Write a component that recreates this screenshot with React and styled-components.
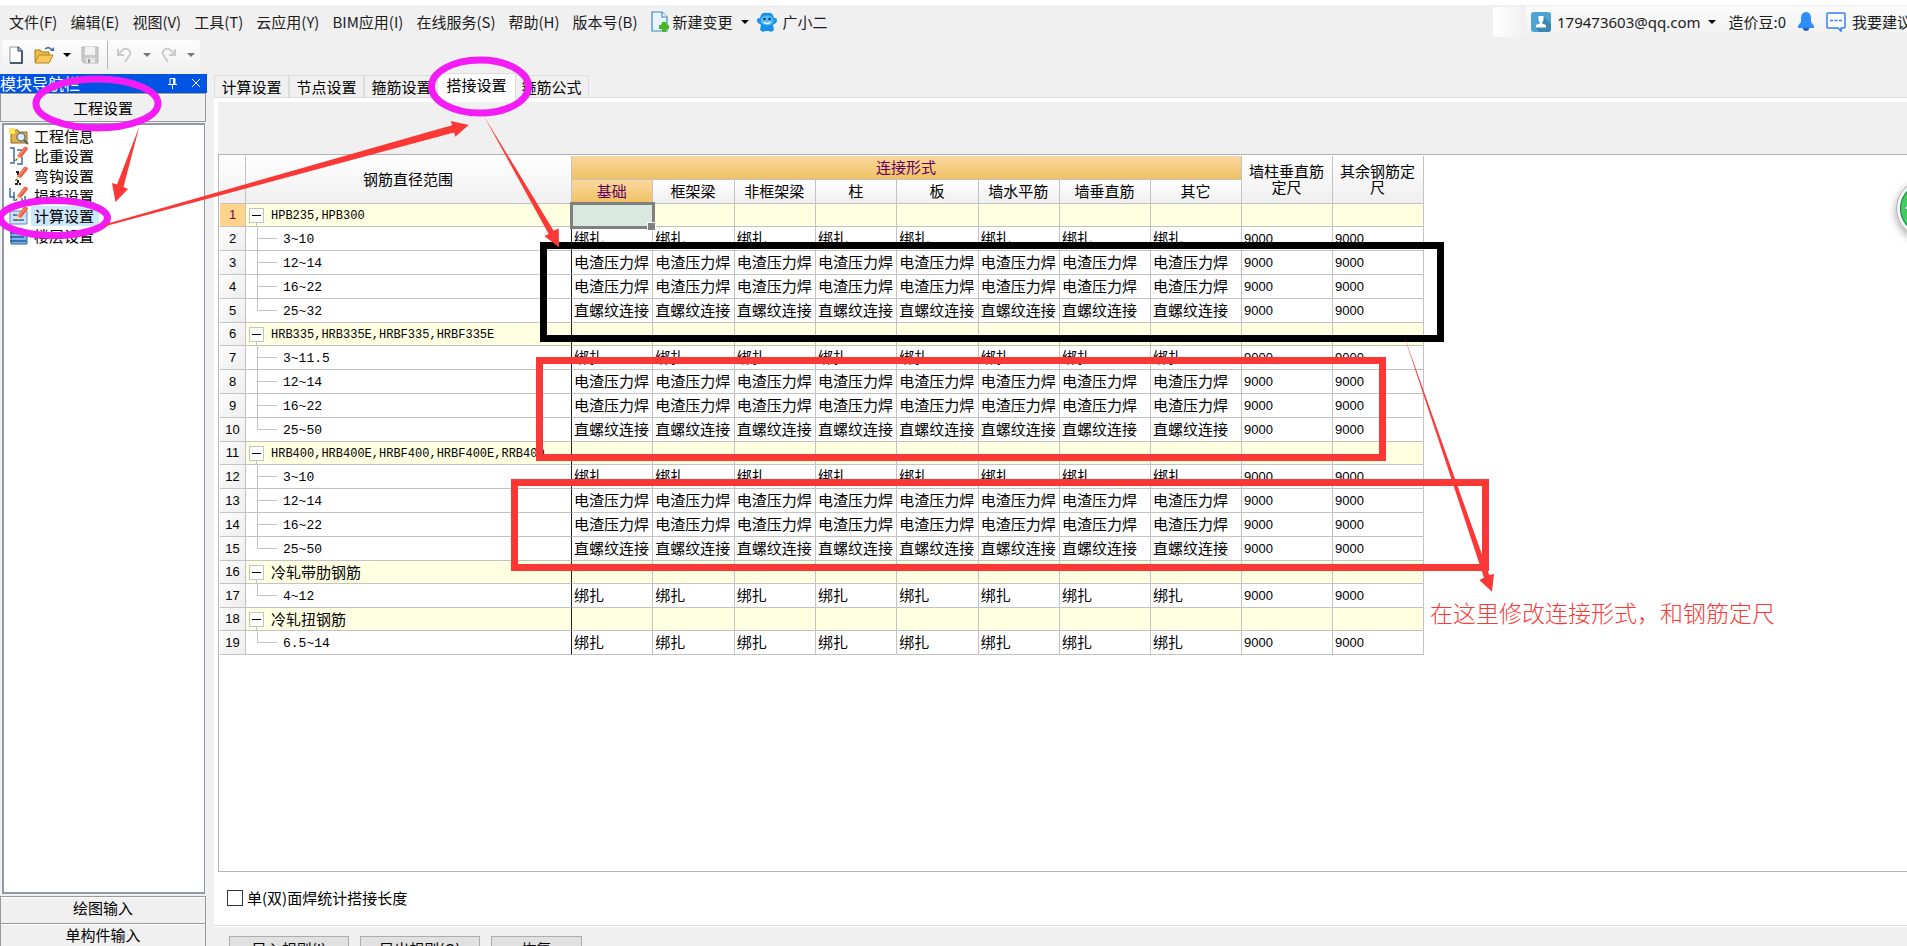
import React from "react";
import styled, { createGlobalStyle, css } from "styled-components";

const GlobalStyle = createGlobalStyle`
  * { box-sizing: border-box; }
  html, body { margin: 0; overflow: hidden; }
  body {
    background: #f0f0f0;
    color: #000;
    font-family: "Noto Sans CJK SC", sans-serif;
    font-size: 15px;
    line-height: 20px;
  }
  button, input { font: inherit; color: inherit; margin: 0; }
  ul { list-style: none; margin: 0; padding: 0; }
`;

const Window = styled.div`
  position: relative;
  display: flex;
  flex-direction: column;
  height: 100vh;
  overflow: hidden;
  border-top: 5px solid #fff;
`;

const MenuBar = styled.header`
  display: flex;
  flex: none;
  align-items: center;
  height: 33px;
  padding-left: 9px;
  white-space: nowrap;
  color: #1c1c1c;
`;

const Menus = styled.nav`
  display: flex;
  align-items: center;
  gap: ${(p) => p.$gap}px;
`;

const PlainButton = styled.button`
  display: flex;
  align-items: center;
  gap: ${(p) => p.$gap || 0}px;
  padding: 0;
  border: 0;
  background: none;
  white-space: nowrap;
`;

const Caret = styled.span`
  border: 4px solid transparent;
  border-top-color: ${(p) => (p.$dim ? "#777" : "#000")};
  border-bottom-width: 0;
  margin-left: ${(p) => p.$space || 0}px;
`;

const Account = styled.div`
  display: flex;
  align-items: center;
  height: 32px;
  margin-left: auto;
  margin-right: -5px;
`;

const AccountGrip = styled.div`
  width: 31px;
  height: 30px;
  margin-right: 2px;
  border-radius: 3px;
  background: linear-gradient(90deg, #fff, #f0f0f0);
`;

const AccountTools = styled.div`
  display: flex;
  align-items: center;
  gap: 12px;
  height: 32px;
  padding-left: 5px;
  background: linear-gradient(#fbfbfb, #f0f0f0);
`;

const Email = styled.span`
  font-family: "Noto Sans", sans-serif;
`;

const ToolBar = styled.div`
  display: flex;
  flex: none;
  align-items: center;
  width: 198px;
  height: 30px;
  margin: 2px 0 4px 2px;
  padding-left: 6px;
  border-radius: 3px;
  background: linear-gradient(#fdfdfd, #f1f1f1);
`;

const ToolGroup = styled.div`
  display: flex;
  align-items: center;
  gap: ${(p) => p.$gap}px;
  height: 28px;
  ${(p) => p.$divided && css`
    padding-left: 9px;
    margin-left: 8px;
    border-left: 1px solid #b4b4b4;
  `}
`;

const Workspace = styled.div`
  display: flex;
  flex: 1;
  min-height: 0;
`;

const NavPanel = styled.aside`
  display: flex;
  flex: none;
  flex-direction: column;
  width: 207px;
  margin-bottom: -4px;
`;

const NavTitle = styled.div`
  display: flex;
  flex: none;
  align-items: center;
  gap: 14px;
  height: 19px;
  padding: 0 6px 1px 0;
  background: #0054e3;
  color: #fff;
  font-size: 16px;
  line-height: 18px;
`;

const NavTitleText = styled.span`
  flex: 1;
`;

const NavSection = styled.button`
  flex: none;
  height: ${(p) => (p.$head ? 29 : 27)}px;
  width: 206px;
  padding: 0 0 ${(p) => (p.$head ? 0 : 4)}px;
  border: 1px solid #9a9a9a;
  border-bottom-width: ${(p) => (p.$head ? 1 : 0)}px;
  background: #f0f0f0;
  box-shadow: inset 0 1px #fff;
  line-height: 20px;
`;

const NavList = styled.ul`
  flex: 1;
  margin: 1px 2px 2px 2px;
  width: 203px;
  padding-top: 1px;
  border: 2px solid #9298a5;
  border-right-width: 1px;
  background: #fff;
`;

const NavItem = styled.button`
  display: flex;
  align-items: center;
  gap: 2px;
  width: 100%;
  height: 20px;
  padding: 0 0 0 5px;
  border: 0;
  background: none;
  text-align: left;
`;

const NavLabel = styled.span`
  padding: 0 5px 0 3px;
  height: 20px;
  line-height: 20px;
  background: ${(p) => (p.$active ? "#cce8ff" : "transparent")};
`;

const Page = styled.main`
  display: flex;
  flex: 1;
  flex-direction: column;
  min-width: 0;
  margin-left: 7px;
`;

const TabStrip = styled.div`
  display: flex;
  flex: none;
  align-items: flex-end;
  height: 24px;
  border-bottom: 1px solid #dcdcdc;
`;

const Tab = styled.button`
  width: 75px;
  height: 22px;
  padding: 0;
  border: 1px solid #dcdcdc;
  border-bottom: 0;
  background: #f0f0f0;

  ${(p) => p.$active && css`
    z-index: 1;
    width: 79px;
    height: 26px;
    margin: 0 -2px -2px;
    padding-bottom: 4px;
    background: #fff;
  `}
`;

const PageBody = styled.section`
  display: flex;
  flex: 1;
  flex-direction: column;
  min-height: 0;
  border-left: 4px solid #fff;
  border-top: 4px solid #fff;
`;

const Banner = styled.div`
  flex: none;
  height: 52px;
`;

const GridFrame = styled.div`
  flex: 1;
  min-height: 0;
  padding: 1px 0 0 1px;
  border: 1px solid #b2b2b8;
  border-right: 0;
  background: #fff;
  overflow: hidden;
`;

const Grid = styled.table`
  width: 1204px;
  table-layout: fixed;
  border-collapse: separate;
  border-spacing: 0;
`;

const cellLines = css`
  border-right: 1px solid #c3c3c3;
  border-bottom: 1px solid #c3c3c3;
`;

const HeadCell = styled.th`
  ${cellLines}
  height: 24px;
  padding: 0 5px 2px 4px;
  font-weight: 400;
  line-height: 16px;
  color: ${(p) => (p.$hot ? "#600060" : "#000")};
  background: ${(p) =>
    p.$hot ? "linear-gradient(#fad8a0, #f0c062)" : "linear-gradient(#fff, #efefef)"};
`;

const RowNumber = styled.th`
  ${cellLines}
  padding: 0;
  font: 400 13px/20px "Liberation Sans", sans-serif;
  color: ${(p) => (p.$hot ? "#800040" : "#000")};
  background: ${(p) => (p.$hot ? "#ffd389" : "linear-gradient(135deg, #fdfdfd, #ededed)")};
`;

const Row = styled.tr`
  height: ${(p) => (p.$group ? 23 : 24)}px;
  background: ${(p) => (p.$group ? "#ffffe1" : "#fff")};
`;

const NameCell = styled.td`
  border-right: 1px solid #222;
  border-bottom: 1px solid #c3c3c3;
  padding: 0;
`;

const Cell = styled.td`
  ${cellLines}
  padding: 0 0 2px 2px;
  line-height: 20px;
  white-space: nowrap;
  overflow: hidden;
`;

const NumberCell = styled(Cell)`
  padding-bottom: 0;
  font: 13px/20px "Liberation Sans", sans-serif;
`;

const SelectedCell = styled(Cell)`
  position: relative;
  overflow: visible;
  background: #d8eae0;
  outline: 3px solid #808080;
  outline-offset: -1px;

  &::after {
    content: "";
    position: absolute;
    right: -4px;
    bottom: -5px;
    width: 7px;
    height: 7px;
    border: 1px solid #fff;
    background: #808080;
  }
`;

const TreeNode = styled.div`
  display: flex;
  align-items: center;
  height: ${(p) => (p.$group ? 22 : 23)}px;
  padding-left: ${(p) => (p.$group ? 3 : 11)}px;
  gap: ${(p) => (p.$group ? 7 : 6)}px;
  line-height: 20px;
  white-space: nowrap;
`;

const TreeText = styled.span`
  ${(p) => p.$latin && css`
    font: ${p.$group ? 12 : 13}px/20px "Liberation Mono", monospace;
    padding-top: 2px;
  `}
`;

const ExpandColumn = styled.div`
  display: flex;
  flex-direction: column;
  align-items: center;
  align-self: stretch;
  padding-top: 4px;

  &::after {
    content: "";
    flex: 1;
    width: 1px;
    background: #c3c3c3;
  }
`;

const Expander = styled.button`
  display: flex;
  align-items: center;
  justify-content: center;
  width: 15px;
  height: 15px;
  padding: 0;
  border: 1px solid #c3c3c3;
  background: #fff;

  &::before {
    content: "";
    width: 9px;
    height: 1px;
    background: #000;
  }
`;

const Branch = styled.div`
  display: flex;
  flex-direction: column;
  align-self: stretch;
  width: 20px;

  &::before, &::after {
    content: "";
    flex: 1;
    border-left: 1px solid #c3c3c3;
  }
  &::before { border-bottom: 1px solid #c3c3c3; }
  &::after { border-left-color: ${(p) => (p.$last ? "transparent" : "#c3c3c3")}; }
`;

const Options = styled.div`
  display: flex;
  flex: none;
  align-items: center;
  height: 54px;
  margin-left: -4px;
  padding: 0 0 2px 13px;
  border-bottom: 1px solid #dcdcdc;
  background: #fff;
`;

const CheckLabel = styled.label`
  display: flex;
  align-items: center;
  gap: 4px;
`;

const CheckBox = styled.input`
  appearance: none;
  width: 16px;
  height: 16px;
  border: 1px solid #333;
  background: #fff;
`;

const Footer = styled.div`
  display: flex;
  flex: none;
  align-items: flex-start;
  gap: 11px;
  height: 20px;
  margin-left: -4px;
  padding: 9px 0 0 15px;
  border-top: 1px solid #fff;
  background: #f0f0f0;
`;

const FooterButton = styled.button`
  flex: none;
  width: ${(p) => (p.$short ? 91 : 120)}px;
  height: 26px;
  padding: 0;
  border: 1px solid #adadad;
  background: #e1e1e1;
`;

const Markup = styled.svg`
  position: absolute;
  left: 0;
  top: -5px;
  width: 1907px;
  height: 946px;
  pointer-events: none;
  z-index: 2;
`;

const Callout = styled.p`
  position: absolute;
  left: 1430px;
  top: 591px;
  margin: 0;
  color: #fb3836;
  font-size: 23px;
  font-weight: 300;
  line-height: 32px;
  white-space: nowrap;
  z-index: 3;
`;

const FloatingBall = styled.button`
  position: absolute;
  right: -48px;
  top: 174px;
  display: flex;
  align-items: center;
  width: 59px;
  height: 59px;
  padding: 0 0 4px 7px;
  border: 1px solid #aaa;
  border-radius: 50%;
  background: radial-gradient(circle, #44cc5e 24px, #127a55 25px, #f4f4f4 26px);
  box-shadow: 0 3px 8px rgba(0, 0, 0, 0.35);
`;

/* ---------- icons ---------- */

const NewChangeIcon = () => (
  <svg width="18" height="21" viewBox="0 0 18 21">
    <path d="M1 1h10l5 5v14H1z" fill="#e9f4fc" stroke="#3d87bd" strokeWidth="1.2" />
    <path d="M11 1v5h5" fill="#fff" stroke="#3d87bd" strokeWidth="1.2" />
    <path d="M13 10.500l5 5-5 5-5-5z" fill="#4bb51d" />
    <path d="M11 11h4v3h3v4h-3v3h-4v-3H8v-4h3z" fill="#4bb51d" />
  </svg>
);

const RobotIcon = () => (
  <svg width="20" height="20" viewBox="0 0 20 20">
    <path d="M4 3Q6 0 10 1q4-1 6 2l1 3q3 0 3 2 0 3-3 4l-1 1 1 5-3 2-2-1H8l-2 1-3-2 1-5-1-1Q0 11 0 8q0-2 3-2z" fill="#1a8fe6" />
    <ellipse cx="10" cy="8.500" rx="6.500" ry="5" fill="#4fbcf8" />
    <circle cx="7.500" cy="7" r="1.200" fill="#0d2a55" />
    <circle cx="12.500" cy="7" r="1.200" fill="#0d2a55" />
    <path d="M6.500 10q3.500 3 7 0" fill="none" stroke="#fff" strokeWidth="1.300" />
  </svg>
);

const UserIcon = () => (
  <svg width="20" height="20" viewBox="0 0 20 20">
    <rect width="20" height="20" rx="3" fill="#4da3d4" />
    <path d="M13 5l7 7v5q0 3-3 3H8l-3-4z" fill="#3a86b4" />
    <path d="M7.500 4h5v3.500q0 1.500-1.200 2.500v1.500l3.700 1.500v2.500H5V13l3.700-1.500V10Q7.500 9 7.500 7.500z" fill="#fff" />
  </svg>
);

const BellIcon = () => (
  <svg width="16" height="20" viewBox="0 0 16 20">
    <path d="M5 1q3-2 6 0 2 1.500 2 5v4l3 4v2H0v-2l3-4V6q0-3.500 2-5z" fill="#2f8dfa" />
    <path d="M4.500 16h7q-1 3-3.500 3t-3.500-3z" fill="#1a5fb8" />
  </svg>
);

const ChatIcon = () => (
  <svg width="20" height="20" viewBox="0 0 20 20" fill="none" stroke="#2f80f5">
    <path d="M2 1h16q1 0 1 1v13q0 1-1 1h-3v3l-3-3H2q-1 0-1-1V2q0-1 1-1z" fill="#fff" strokeWidth="1.500" />
    <path d="M4 8.500h3M8.500 8.500h3M13 8.500h3" strokeWidth="1.500" />
  </svg>
);

const NewFileIcon = () => (
  <svg width="16" height="18" viewBox="0 0 16 18">
    <path d="M2 1h8l4 4v12H2z" fill="#fff" stroke="#8a9bad" />
    <path d="M10 1l4 4v12H2" fill="none" stroke="#1c3752" strokeWidth="1.500" />
    <path d="M10 1v4h4" fill="#cfdce8" stroke="#1c3752" />
  </svg>
);

const OpenIcon = () => (
  <svg width="21" height="18" viewBox="0 0 21 18">
    <path d="M1 16V4h5l2 2h7v4" fill="#f0bd4a" stroke="#a87718" />
    <path d="M1 17L5 9h14l-4 8z" fill="#fbc95a" stroke="#b78322" />
    <path d="M11 3q4-3 7 1" fill="none" stroke="#3f6f98" strokeWidth="1.500" />
    <path d="M16 5h4V1z" fill="#3f6f98" />
  </svg>
);

const SaveIcon = () => (
  <svg width="18" height="18" viewBox="0 0 18 18">
    <path d="M1 1h16v16H3l-2-2z" fill="#c9c9c9" stroke="#b5b5b5" />
    <path d="M4 1h10v8H4z" fill="#f2f2f2" />
    <path d="M5 12h9v5H5z" fill="#e6e6e6" />
    <path d="M7 13h2v4H7z" fill="#999" />
  </svg>
);

const UndoIcon = ({ flip }) => (
  <svg width="15" height="16" viewBox="0 0 15 16" fill="none" stroke="#cbcbcb" strokeWidth="2">
    {flip ? (
      <path d="M14 2v6H8M13 7Q8 0 4 2.500T3 9l4 6" />
    ) : (
      <path d="M1 2v6h6M2 7q5-7 9-4.500T12 9l-4 6" />
    )}
  </svg>
);

const PinIcon = () => (
  <svg width="9" height="12" viewBox="0 0 9 12" fill="none" stroke="#fff">
    <path d="M2 7V1.500h5V7M0 7.500h9M4.500 8v4" />
    <path d="M6 1v6" strokeWidth="2" />
  </svg>
);

const CloseIcon = () => (
  <svg width="10" height="10" viewBox="0 0 10 10" stroke="#fff">
    <path d="M1 1l8 8M9 1L1 9" />
  </svg>
);

const Pencil = () => (
  <g>
    <path d="M8 9L15 0q3-1 4 2l-7 9z" fill="#ee5f42" />
    <path d="M8 9l-2 5 6-3z" fill="#f6d9a8" />
    <path d="M7 12l-1 2 2.500-1z" fill="#2b1a10" />
    <path d="M9.500 9L16 1.500" stroke="#f9b09a" />
  </g>
);

const navDrawings = {
  info: (
    <g>
      <path d="M2 3h7l1 2h8v11H2z" fill="#e3b04b" stroke="#8f6a1c" />
      <path d="M0 1h6v6H0z" fill="#ffe45c" />
      <circle cx="12" cy="10" r="4" fill="#dceefb" stroke="#6b7686" strokeWidth="1.500" />
      <path d="M15 13l4 4" stroke="#59616e" strokeWidth="2" />
    </g>
  ),
  weight: (
    <g>
      <path d="M1 1h4v15H1M8 3h5M13 10v7H8" fill="none" stroke="#3a6ea8" strokeWidth="1.500" />
      <Pencil />
    </g>
  ),
  hook: (
    <g>
      <path d="M7 5h4M9 5v12M6 17h6" fill="none" stroke="#222" strokeWidth="2" strokeDasharray="3 1" />
      <Pencil />
    </g>
  ),
  loss: (
    <g>
      <path d="M1 1v9h5M5 5v9M9 16h4v-5M16 9v7" fill="none" stroke="#3a6ea8" strokeWidth="1.500" />
      <Pencil />
    </g>
  ),
  calc: (
    <g>
      <path d="M1 4h17v13H1z" fill="#cfe3f8" stroke="#5d87bd" />
      <path d="M4 8h4M4 13h11" stroke="#33639c" strokeWidth="1.500" />
      <Pencil />
    </g>
  ),
  floor: (
    <g>
      <path d="M2 2h12l4 3v12H2z" fill="#7db3e8" stroke="#28649f" />
      <path d="M1 6h14M1 10h14M1 14h16" stroke="#1f5c99" strokeWidth="1.500" />
    </g>
  ),
};

const NavIcon = ({ kind }) => (
  <svg width="20" height="18" viewBox="0 0 20 18">{navDrawings[kind]}</svg>
);

/* ---------- data ---------- */

const menus = ["文件(F)", "编辑(E)", "视图(V)", "工具(T)", "云应用(Y)", "BIM应用(I)", "在线服务(S)", "帮助(H)", "版本号(B)"];

const navItems = [
  ["info", "工程信息"],
  ["weight", "比重设置"],
  ["hook", "弯钩设置"],
  ["loss", "损耗设置"],
  ["calc", "计算设置"],
  ["floor", "楼层设置"],
];

const tabs = ["计算设置", "节点设置", "箍筋设置", "搭接设置", "箍筋公式"];

const columns = ["基础", "框架梁", "非框架梁", "柱", "板", "墙水平筋", "墙垂直筋", "其它"];

const TIE = "绑扎";
const WELD = "电渣压力焊";
const THREAD = "直螺纹连接";

const groups = [
  { name: "HPB235,HPB300", rows: [["3~10", TIE], ["12~14", WELD], ["16~22", WELD], ["25~32", THREAD]] },
  { name: "HRB335,HRB335E,HRBF335,HRBF335E", rows: [["3~11.5", TIE], ["12~14", WELD], ["16~22", WELD], ["25~50", THREAD]] },
  { name: "HRB400,HRB400E,HRBF400,HRBF400E,RRB400,", rows: [["3~10", TIE], ["12~14", WELD], ["16~22", WELD], ["25~50", THREAD]] },
  { name: "冷轧带肋钢筋", cjk: true, rows: [["4~12", TIE]] },
  { name: "冷轧扭钢筋", cjk: true, rows: [["6.5~14", TIE]] },
];

const flatRows = groups.flatMap((g) => [
  { group: true, name: g.name, latin: !g.cjk },
  ...g.rows.map(([name, joint], i) => ({ name, joint, latin: true, last: i === g.rows.length - 1 })),
]);

const GridRow = ({ row, index }) => (
  <Row $group={row.group}>
    <RowNumber scope="row" $hot={index === 0}>{index + 1}</RowNumber>
    <NameCell>
      <TreeNode $group={row.group}>
        {row.group ? (
          <ExpandColumn><Expander aria-label="折叠" /></ExpandColumn>
        ) : (
          <Branch $last={row.last} />
        )}
        <TreeText $latin={row.latin} $group={row.group}>{row.name}</TreeText>
      </TreeNode>
    </NameCell>
    {columns.map((c, i) =>
      index === 0 && i === 0 ? <SelectedCell key={c} /> : <Cell key={c}>{row.joint}</Cell>
    )}
    <NumberCell>{row.group ? "" : "9000"}</NumberCell>
    <NumberCell>{row.group ? "" : "9000"}</NumberCell>
  </Row>
);

export default function App() {
  return (
    <>
      <GlobalStyle />
      <Window>
        <MenuBar>
          <Menus $gap={8}>
            <Menus $gap={13}>
              {menus.map((m) => <PlainButton key={m}>{m}</PlainButton>)}
              <PlainButton $gap={4}><NewChangeIcon />新建变更<Caret $space={4} /></PlainButton>
            </Menus>
            <PlainButton $gap={6}><RobotIcon />广小二</PlainButton>
          </Menus>
          <Account>
            <AccountGrip />
            <AccountTools>
              <PlainButton $gap={6}><UserIcon /><Email>179473603@qq.com</Email><Caret $space={2} /></PlainButton>
              <PlainButton>造价豆:0</PlainButton>
              <PlainButton aria-label="通知"><BellIcon /></PlainButton>
              <PlainButton $gap={6}><ChatIcon />我要建议</PlainButton>
            </AccountTools>
          </Account>
        </MenuBar>

        <ToolBar>
          <ToolGroup $gap={10}>
            <PlainButton aria-label="新建"><NewFileIcon /></PlainButton>
            <PlainButton aria-label="打开" $gap={8}><OpenIcon /><Caret /></PlainButton>
            <PlainButton aria-label="保存"><SaveIcon /></PlainButton>
          </ToolGroup>
          <ToolGroup $gap={10} $divided>
            <PlainButton aria-label="撤销" $gap={11}><UndoIcon /><Caret $dim /></PlainButton>
            <PlainButton aria-label="恢复操作" $gap={11}><UndoIcon flip /><Caret $dim /></PlainButton>
          </ToolGroup>
        </ToolBar>

        <Workspace>
          <NavPanel>
            <NavTitle>
              <NavTitleText>模块导航栏</NavTitleText>
              <PlainButton aria-label="固定"><PinIcon /></PlainButton>
              <PlainButton aria-label="关闭"><CloseIcon /></PlainButton>
            </NavTitle>
            <NavSection $head>工程设置</NavSection>
            <NavList>
              {navItems.map(([kind, label]) => (
                <li key={label}>
                  <NavItem>
                    <NavIcon kind={kind} />
                    <NavLabel $active={kind === "calc"}>{label}</NavLabel>
                  </NavItem>
                </li>
              ))}
            </NavList>
            <NavSection>绘图输入</NavSection>
            <NavSection>单构件输入</NavSection>
          </NavPanel>

          <Page>
            <TabStrip role="tablist">
              {tabs.map((t) => (
                <Tab key={t} role="tab" aria-selected={t === "搭接设置"} $active={t === "搭接设置"}>{t}</Tab>
              ))}
            </TabStrip>
            <PageBody>
              <Banner />
              <GridFrame>
                <Grid>
                  <colgroup>
                    <col width="26" />
                    <col width="326" />
                    {columns.slice(0, 6).map((c) => <col key={c} />)}
                    <col width="91" />
                    <col width="91" />
                    <col width="91" />
                    <col width="91" />
                  </colgroup>
                  <thead>
                    <tr>
                      <HeadCell rowSpan={2} />
                      <HeadCell rowSpan={2}>钢筋直径范围</HeadCell>
                      <HeadCell colSpan={8} $hot>连接形式</HeadCell>
                      <HeadCell rowSpan={2}>墙柱垂直筋定尺</HeadCell>
                      <HeadCell rowSpan={2}>其余钢筋定尺</HeadCell>
                    </tr>
                    <tr>
                      {columns.map((c, i) => <HeadCell key={c} $hot={i === 0}>{c}</HeadCell>)}
                    </tr>
                  </thead>
                  <tbody>
                    {flatRows.map((row, i) => <GridRow key={i} row={row} index={i} />)}
                  </tbody>
                </Grid>
              </GridFrame>
              <Options>
                <CheckLabel><CheckBox type="checkbox" />单(双)面焊统计搭接长度</CheckLabel>
              </Options>
              <Footer>
                <FooterButton>导入规则(I)</FooterButton>
                <FooterButton>导出规则(O)</FooterButton>
                <FooterButton $short>恢复</FooterButton>
              </Footer>
            </PageBody>
          </Page>
        </Workspace>

        <FloatingBall aria-label="加速">
          <svg width="12" height="12" viewBox="0 0 12 12">
            <path d="M0 8L6 1l6 7H8v4H4V8z" fill="#fff" stroke="#208040" strokeWidth="0.500" />
          </svg>
        </FloatingBall>

        <Markup viewBox="0 0 1907 946" aria-hidden="true">
          <g fill="none" strokeWidth="7">
            <rect x="543.5" y="245.5" width="897" height="93" stroke="#000" />
            <rect x="539.5" y="360.5" width="843" height="97" stroke="#fb3836" />
            <rect x="514.5" y="482.5" width="971" height="85" stroke="#fb3836" />
          </g>
          <g fill="none" stroke="#f41cf4" strokeWidth="7">
            <ellipse cx="97" cy="103.5" rx="61" ry="24.500" />
            <ellipse cx="54" cy="218" rx="53.5" ry="17.500" />
            <ellipse cx="480" cy="86.500" rx="48.500" ry="26.500" />
          </g>
          <g fill="#fb3836">
            <path d="M139.500 126L123.500 187 128 189 115.500 202 112 183 117 184.500z" />
            <path d="M106 224L452 125.300 451 121 468.700 125 455.300 136.700 454 132.500 106 226z" />
            <path d="M483.300 115L553.700 230.700 558.700 228.300 559 247.300 544.300 236 548.700 234z" />
            <path d="M1403 332.700L1489.300 575 1494 574 1492 591.700 1479.300 580 1484 577.700z" />
          </g>
        </Markup>
        <Callout>在这里修改连接形式，和钢筋定尺</Callout>
      </Window>
    </>
  );
}
